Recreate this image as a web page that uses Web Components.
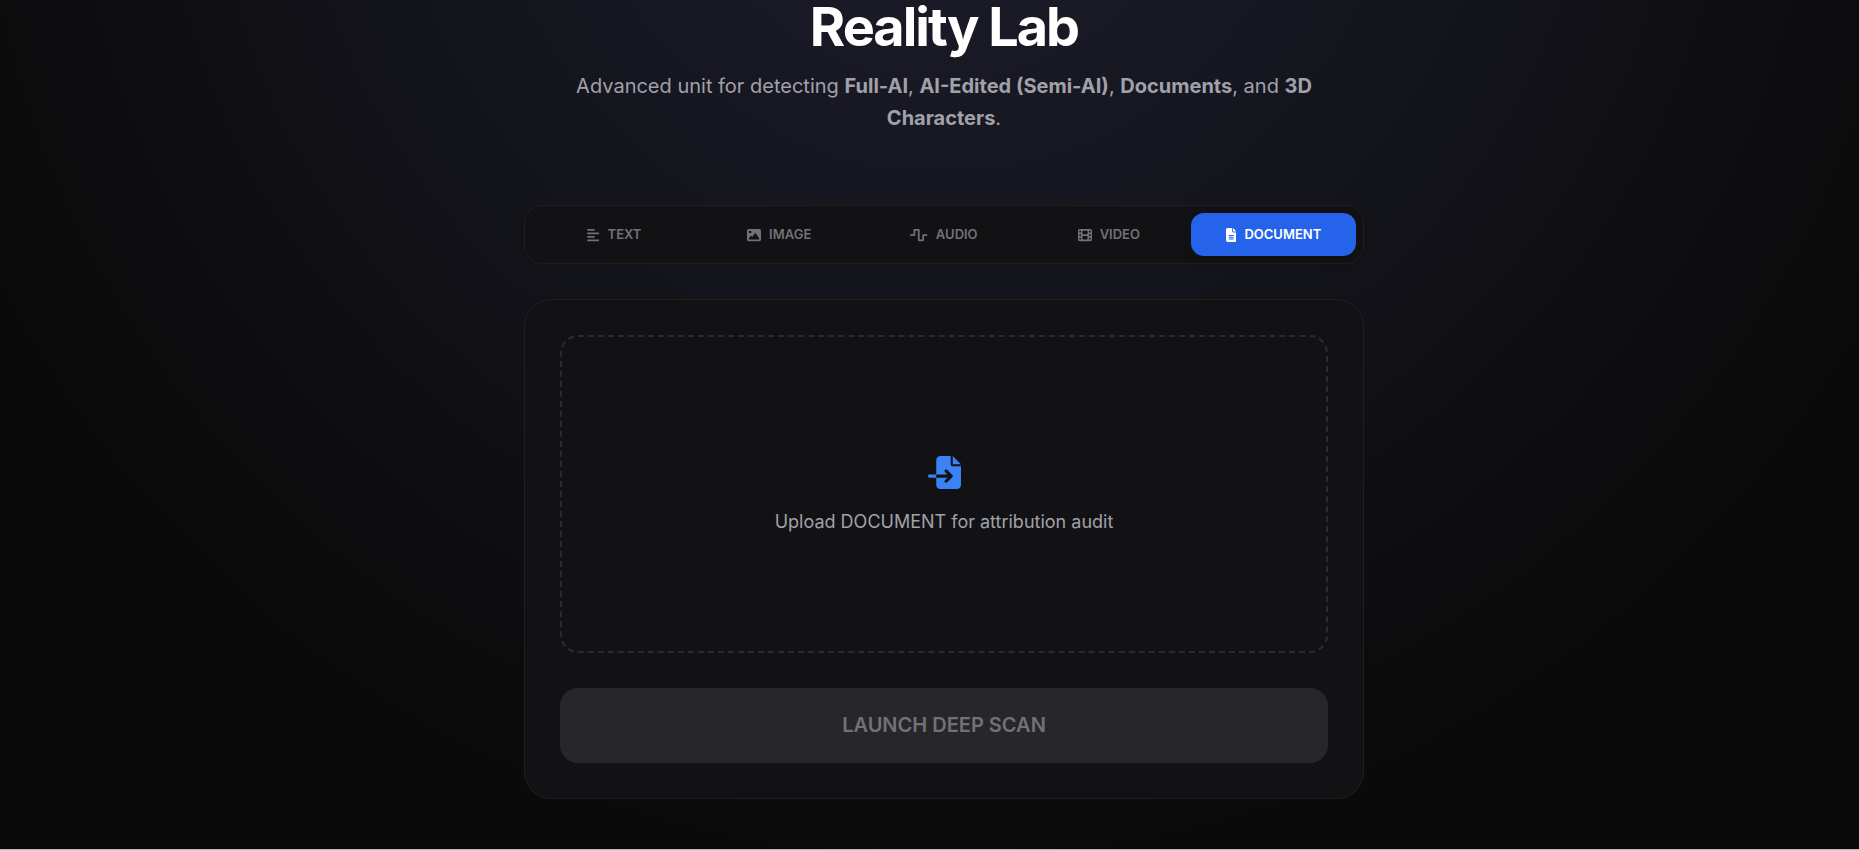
<!DOCTYPE html>
<html lang="en">
<head>
<meta charset="utf-8">
<meta name="viewport" content="width=device-width, initial-scale=1">
<title>Reality Lab</title>
<style>
html {
  background: #0a0a0a;
}

body {
  margin: 0;
  font-family: Inter, "Liberation Sans", sans-serif;
  color: #a1a1aa;
  --card: #121214;
  --line: #1f1f22;
  --muted: #71717a;
  --accent: #2563eb;
}
</style>
</head>
<body>
<lab-page>
  <lab-header slot="header" heading="Reality Lab">
    Advanced unit for detecting <b>Full-AI</b>, <b>AI-Edited (Semi-AI)</b>, <b>Documents</b>, and <b>3D Characters</b>.
  </lab-header>
  <lab-tabs>
    <lab-tab icon="text">TEXT</lab-tab>
    <lab-tab icon="image">IMAGE</lab-tab>
    <lab-tab icon="audio">AUDIO</lab-tab>
    <lab-tab icon="video">VIDEO</lab-tab>
    <lab-tab icon="document" active>DOCUMENT</lab-tab>
  </lab-tabs>
  <lab-card>
    <lab-dropzone>Upload DOCUMENT for attribution audit</lab-dropzone>
    <lab-launch disabled>LAUNCH DEEP SCAN</lab-launch>
  </lab-card>
</lab-page>

<script>
(function() {
// name: [viewBox width, path], all on a 512 high grid
const icons = {
  text: [448, 'M288 64c0 17.7-14.3 32-32 32L32 96C14.3 96 0 81.7 0 64S14.3 32 32 32l224 0c17.7 0 32 14.3 32 32zm0 256c0 17.7-14.3 32-32 32L32 352c-17.7 0-32-14.3-32-32s14.3-32 32-32l224 0c17.7 0 32 14.3 32 32zM0 192c0-17.7 14.3-32 32-32l384 0c17.7 0 32 14.3 32 32s-14.3 32-32 32L32 224c-17.7 0-32-14.3-32-32zM448 448c0 17.7-14.3 32-32 32L32 480c-17.7 0-32-14.3-32-32s14.3-32 32-32l384 0c17.7 0 32 14.3 32 32z'],
  image: [512, 'M0 96C0 60.7 28.7 32 64 32l384 0c35.3 0 64 28.7 64 64l0 320c0 35.3-28.7 64-64 64L64 480c-35.3 0-64-28.7-64-64L0 96zM323.8 202.5c-4.5-6.6-11.9-10.5-19.8-10.5s-15.4 3.9-19.8 10.5l-87 127.6L170.7 297c-4.6-5.7-11.5-9-18.7-9s-14.2 3.3-18.7 9l-64 80c-5.8 7.2-6.9 17.1-2.9 25.4s12.4 13.6 21.6 13.6l96 0 32 0 208 0c8.9 0 17.1-4.9 21.2-12.8s3.6-17.4-1.4-24.7l-120-176zM112 192a48 48 0 1 0 0-96 48 48 0 1 0 0 96z'],
  audio: [640, 'M128 64c0-17.7 14.3-32 32-32l160 0c17.7 0 32 14.3 32 32l0 352 96 0 0-160c0-17.7 14.3-32 32-32l128 0c17.7 0 32 14.3 32 32s-14.3 32-32 32l-96 0 0 160c0 17.7-14.3 32-32 32l-160 0c-17.7 0-32-14.3-32-32l0-352-96 0 0 160c0 17.7-14.3 32-32 32L32 288c-17.7 0-32-14.3-32-32s14.3-32 32-32l96 0 0-160z'],
  video: [512, 'M0 96C0 60.7 28.7 32 64 32l384 0c35.3 0 64 28.7 64 64l0 320c0 35.3-28.7 64-64 64L64 480c-35.3 0-64-28.7-64-64L0 96zM48 368l0 32c0 8.8 7.2 16 16 16l32 0c8.8 0 16-7.2 16-16l0-32c0-8.8-7.2-16-16-16l-32 0c-8.8 0-16 7.2-16 16zm368-16c-8.8 0-16 7.2-16 16l0 32c0 8.8 7.2 16 16 16l32 0c8.8 0 16-7.2 16-16l0-32c0-8.8-7.2-16-16-16l-32 0zM48 240l0 32c0 8.8 7.2 16 16 16l32 0c8.8 0 16-7.2 16-16l0-32c0-8.8-7.2-16-16-16l-32 0c-8.8 0-16 7.2-16 16zm368-16c-8.8 0-16 7.2-16 16l0 32c0 8.8 7.2 16 16 16l32 0c8.8 0 16-7.2 16-16l0-32c0-8.8-7.2-16-16-16l-32 0zM48 112l0 32c0 8.8 7.2 16 16 16l32 0c8.8 0 16-7.2 16-16l0-32c0-8.8-7.2-16-16-16L64 96c-8.8 0-16 7.2-16 16zM416 96c-8.8 0-16 7.2-16 16l0 32c0 8.8 7.2 16 16 16l32 0c8.8 0 16-7.2 16-16l0-32c0-8.8-7.2-16-16-16l-32 0zM160 128l0 64c0 17.7 14.3 32 32 32l128 0c17.7 0 32-14.3 32-32l0-64c0-17.7-14.3-32-32-32L192 96c-17.7 0-32 14.3-32 32zm32 160c-17.7 0-32 14.3-32 32l0 64c0 17.7 14.3 32 32 32l128 0c17.7 0 32-14.3 32-32l0-64c0-17.7-14.3-32-32-32l-128 0z'],
  document: [384, 'M64 0C28.7 0 0 28.7 0 64L0 448c0 35.3 28.7 64 64 64l256 0c35.3 0 64-28.7 64-64l0-288-128 0c-17.7 0-32-14.3-32-32L224 0 64 0zM256 0l0 128 128 0L256 0zM112 256l160 0c8.8 0 16 7.2 16 16s-7.2 16-16 16l-160 0c-8.8 0-16-7.2-16-16s7.2-16 16-16zm0 64l160 0c8.8 0 16 7.2 16 16s-7.2 16-16 16l-160 0c-8.8 0-16-7.2-16-16s7.2-16 16-16zm0 64l160 0c8.8 0 16 7.2 16 16s-7.2 16-16 16l-160 0c-8.8 0-16-7.2-16-16s7.2-16 16-16z'],
  import: [512, 'M128 64c0-35.3 28.7-64 64-64L352 0l0 128c0 17.7 14.3 32 32 32l128 0 0 288c0 35.3-28.7 64-64 64l-256 0c-35.3 0-64-28.7-64-64l0-112 174.1 0-39 39c-9.4 9.4-9.4 24.6 0 33.9s24.6 9.4 33.9 0l80-80c9.4-9.4 9.4-24.6 0-33.9l-80-80c-9.4-9.4-24.6-9.4-33.9 0s-9.4 24.6 0 33.9l39 39L128 288l0-224zm0 224l0 48L24 336c-13.3 0-24-10.7-24-24s10.7-24 24-24l104 0zM512 128l-128 0L384 0 512 128z']
};

function svg(name) {
  const [width, path] = icons[name];
  return `<svg viewBox="0 0 ${width} 512" fill="currentColor" fill-rule="evenodd" aria-hidden="true"><path d="${path}"/></svg>`;
}

class LabElement extends HTMLElement {
  constructor() {
    super();
    this.attachShadow({mode: 'open'});
  }

  connectedCallback() {
    this.shadowRoot.innerHTML = this.template();
  }
}

class LabPage extends LabElement {
  template() {
    return `
<style>
:host {
  display: flex;
  flex-direction: column;
  align-items: center;
  box-sizing: border-box;
  min-height: 100vh;
  padding: 0 0 50px 29px;
  border-bottom: 1px solid #b4b8ba;
  background: radial-gradient(circle at calc(50% + 14px) -200px, #1e1e2e 0, #0a0a0a 1060px);
}

main {
  display: flex;
  flex-direction: column;
  gap: 35px;
  width: 100%;
  max-width: 840px;
  margin-top: 71px;
}
</style>
<slot name="header"></slot>
<main><slot></slot></main>`;
  }
}

class LabHeader extends LabElement {
  template() {
    return `
<style>
:host {
  display: block;
  max-width: 740px;
  text-align: center;
}

h1 {
  margin: 0 0 16px;
  color: #fff;
  font-size: 54px;
  font-weight: 700;
  line-height: 54px;
  letter-spacing: -2px;
}

p {
  margin: 0;
  font-size: 20px;
  line-height: 32px;
}
</style>
<h1>${this.getAttribute('heading')}</h1>
<p><slot></slot></p>`;
  }
}

class LabTabs extends LabElement {
  template() {
    return `
<style>
:host {
  display: block;
}

div {
  display: flex;
  padding: 7px;
  border: 1px solid var(--line);
  border-radius: 18px;
  background: var(--card);
}
</style>
<div role="tablist"><slot></slot></div>`;
  }

  connectedCallback() {
    super.connectedCallback();
    this.addEventListener('click', e => {
      const tab = e.target.closest('lab-tab');
      if (!tab) return;
      this.querySelectorAll('lab-tab').forEach(t => t.toggleAttribute('active', t === tab));
    });
  }
}

class LabTab extends LabElement {
  static get observedAttributes() {
    return ['active'];
  }

  template() {
    return `
<style>
:host {
  display: block;
  flex: 1 1 0;
}

button {
  display: flex;
  align-items: center;
  justify-content: center;
  gap: 8px;
  width: 100%;
  height: 43px;
  padding: 0;
  border: 0;
  border-radius: 13px;
  background: none;
  color: var(--muted);
  font: 600 13px/19px Inter, "Liberation Sans", sans-serif;
  cursor: pointer;
}

:host([active]) button {
  background: var(--accent);
  color: #fff;
  box-shadow: 0 4px 12px rgba(0, 0, 0, .15);
}

svg {
  height: 14px;
}
</style>
<button type="button" role="tab">${svg(this.getAttribute('icon'))}<span><slot></slot></span></button>`;
  }

  connectedCallback() {
    super.connectedCallback();
    this._updateSelected();
  }

  attributeChangedCallback() {
    this._updateSelected();
  }

  _updateSelected() {
    const button = this.shadowRoot.querySelector('button');
    if (button) button.setAttribute('aria-selected', this.hasAttribute('active'));
  }
}

class LabCard extends LabElement {
  template() {
    return `
<style>
:host {
  display: flex;
  flex-direction: column;
  gap: 35px;
  padding: 35px;
  border: 1px solid var(--line);
  border-radius: 27px;
  background: var(--card);
}
</style>
<slot></slot>`;
  }
}

class LabDropzone extends LabElement {
  template() {
    return `
<style>
:host {
  display: block;
}

label {
  display: flex;
  flex-direction: column;
  align-items: center;
  justify-content: center;
  gap: 14px;
  box-sizing: border-box;
  min-height: 318px;
  border: 2px dashed #2b2b2e;
  border-radius: 18px;
  font-size: 18px;
  line-height: 29px;
  cursor: pointer;
}

input {
  display: none;
}

svg {
  height: 33px;
  padding: 4px 0;
  color: #3b82f6;
}
</style>
<label>
  <input type="file">
  ${svg('import')}
  <span><slot></slot></span>
</label>`;
  }
}

class LabLaunch extends LabElement {
  template() {
    return `
<style>
:host {
  display: block;
}

button {
  width: 100%;
  height: 75px;
  padding: 0 0 2px;
  border: 0;
  border-radius: 18px;
  background: #27272a;
  color: var(--muted);
  font: 600 20px/24px Inter, "Liberation Sans", sans-serif;
}
</style>
<button type="button" ${this.hasAttribute('disabled') ? 'disabled' : ''}><slot></slot></button>`;
  }
}

window.customElements.define('lab-page', LabPage);
window.customElements.define('lab-header', LabHeader);
window.customElements.define('lab-tabs', LabTabs);
window.customElements.define('lab-tab', LabTab);
window.customElements.define('lab-card', LabCard);
window.customElements.define('lab-dropzone', LabDropzone);
window.customElements.define('lab-launch', LabLaunch);
}());
</script>
</body>
</html>
